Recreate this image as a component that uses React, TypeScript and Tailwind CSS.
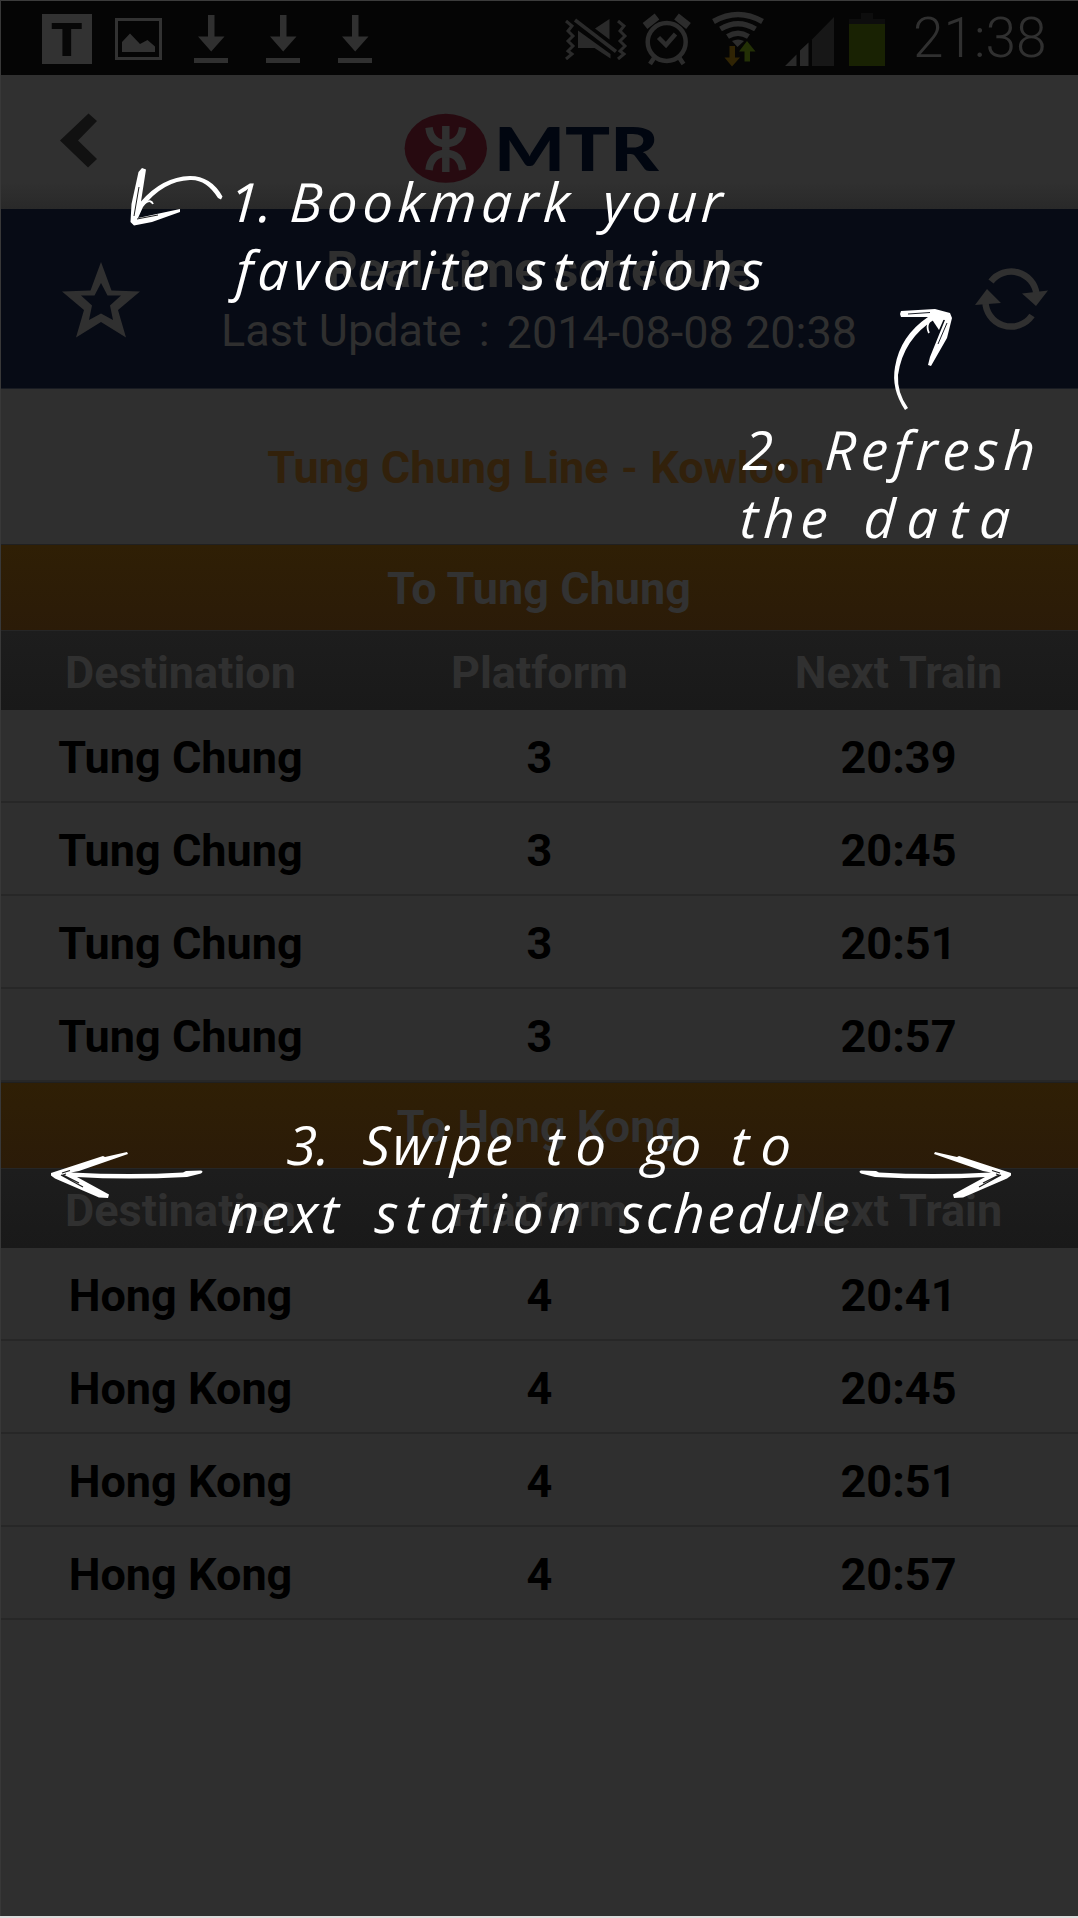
import type { ReactNode } from "react";

type IconProps = { x: number; y?: number; w: number; h?: number; className?: string; children: ReactNode };

function Icon({ x, y = 0, w, h = 75, className = "", children }: IconProps) {
  return (
    <svg viewBox={`${x} ${y} ${w} ${h}`} width={w} height={h} className={`block shrink-0 ${className}`}>
      {children}
    </svg>
  );
}

function Download({ className }: { className: string }) {
  return (
    <Icon x={194} w={34} className={className}>
      <path d="M208 15h6.500v21.500h10L211.200 51.500 198 36.500h10z" fill="#303030" />
      <path d="M194 58h34v5h-34z" fill="#303030" />
    </Icon>
  );
}

function StatusBar() {
  return (
    <div className="flex h-[75px] items-start border-t border-[#3c3c3c] bg-[#050505]">
      <div className="mt-[13px] ml-[42px] flex h-[50px] w-[50px] items-center justify-center bg-[#323232]">
        <span className="inline-block scale-x-[1.150] font-['Lato'] text-[45px] leading-none font-extrabold text-[#070707]">
          T
        </span>
      </div>
      <Icon x={115} w={47} y={1} h={74} className="ml-[23px]">
        <path d="M116.500 19.500h44v39h-44z" fill="none" stroke="#323232" strokeWidth="3" />
        <path d="M122 52V42l8-8.500 10 10.500 7.500-4 7.500 6.500V52z" fill="#323232" />
      </Icon>
      <Download className="-mt-px ml-[32px]" />
      <Download className="-mt-px ml-[38px]" />
      <Download className="-mt-px ml-[38px]" />

      <Icon x={564} w={64} className="-mt-px ml-[192px]">
        <g fill="none" stroke="#2a2a2a" strokeWidth="3">
          <path d="M566 21l6 5-4 5 5 5-5 5 5 5-5 5 4 3-6 5" />
          <path d="M618 21l6 5-4 5 5 5-5 5 5 5-5 5 4 3-6 5" />
          <path d="M575 20l41 31.500" strokeWidth="3.500" />
        </g>
        <path d="M609.500 19v20.500L595 28.500zM578 30.500l32.500 23.500v4.500L594.500 48H578z" fill="#2a2a2a" />
      </Icon>
      <Icon x={642} w={50} className="-mt-px ml-[14px]">
        <g fill="none" stroke="#2c2c2c">
          <circle cx="666.700" cy="42" r="19" strokeWidth="4.500" />
          <path d="M658.500 37.500l7.500 7.500 9.500-11" strokeWidth="4.500" />
          <path d="M645 26l12-9.500M688.500 26l-12-9.500" strokeWidth="7.500" />
          <path d="M654 58l-4 6M679.500 58l4 6" strokeWidth="4.500" />
        </g>
      </Icon>
      <Icon x={710} w={56} className="-mt-px ml-[18px]">
        <g fill="none" stroke="#2c2c2c" strokeWidth="5.500">
          <path d="M713.500 21.500q24.500-14 49 0" />
          <path d="M720.500 29q17.500-10.500 35 0" />
          <path d="M727.500 36.500q10.500-6.500 21 0" />
        </g>
        <path d="M732 41q6-3 12 0l-6.500 6z" fill="#2c2c2c" />
        <path d="M729.500 46h5.500v11.500h5L732 66.500 724.500 57.500h5z" fill="#302404" />
        <path d="M747 41l8.500 10.500H750V61.500h-5.500V51.500H739z" fill="#233006" />
      </Icon>
      <Icon x={784} w={51} className="-mt-px ml-[18px]">
        <path d="M785 66l11.500-11.500V66zM800 66V50.500l8.500-8V66z" fill="#2a2a2a" />
        <path d="M812 66V39.500L834 17v49z" fill="#171717" />
      </Icon>
      <Icon x={848} w={38} className="-mt-px ml-[13px]">
        <path d="M861 13h12v6h12v6h-36v-6h12z" fill="#0d0d0d" />
        <path d="M849 24h36v42h-36z" fill="#192203" />
      </Icon>
      <span className="mt-px ml-[27px] font-['Roboto'] text-[55px] leading-[72px] font-[350] text-[#303030]">
        21:38
      </span>
    </div>
  );
}

function BrandHeader() {
  return (
    <div className="flex h-[134px] items-start bg-linear-to-b from-[#303030] from-80% to-[#292929]">
      <Icon x={58} y={75} w={42} h={100} className="ml-[58px]">
        <path d="M88.500 113.500l8.500 7.500-19 19.500L97 159l-9 8.500L60 140.500z" fill="#111111" />
      </Icon>
      <Icon x={404} y={75} w={84} h={120} className="ml-[304px]">
        <ellipse cx="445.800" cy="148.300" rx="41.200" ry="34.500" fill="#270a10" />
        <g fill="none" stroke="#303030" strokeWidth="7.500">
          <path d="M445.800 126v46" />
          <path d="M429 127.500q2 16 16.800 16 14.800 0 16.800-16" />
          <path d="M429 170q2-16.500 16.800-16.500 14.800 0 16.800 16.500" />
        </g>
      </Icon>
      <span className="mt-[40px] ml-[6px] inline-block origin-left scale-x-[1.225] font-['Lato'] text-[61px] leading-[66px] font-black text-[#010610]">
        MTR
      </span>
    </div>
  );
}

function ScheduleHeader() {
  return (
    <div className="grid h-[180px] grid-cols-[142px_1fr_142px] items-start border-b border-[#191c22] bg-[#070b15] font-['Roboto'] text-[#2f2f2f]">
      <Icon x={60} y={209} w={82} h={140} className="ml-[60px]">
        <path
          d="M101 262l10.500 28.500 28.500 1-22 18.500 8 27.500-25-15.500-25 15.500 8-27.500-22-18.500 28.500-1z M101 283l-6.500 12.500H81l11 10-3 14.500 12-6.500 12 6.500-3-14.500 11-10h-13.500z"
          fill="#303030"
          fillRule="evenodd"
        />
      </Icon>
      <div className="flex flex-col items-center">
        <h1 className="mt-[32px] text-[50px] leading-[58px] font-bold tracking-[-0.500px]">Real-time schedule</h1>
        <p className="mt-[1px] flex text-[45px] leading-[62px]">
          <span>Last Update</span>
          <span className="mr-[17px] ml-[17px]">:</span>
          <span className="mt-[2px]">2014-08-08 20:38</span>
        </p>
      </div>
      <Icon x={974} y={209} w={76} h={140} className="ml-[38px]">
        <g fill="none" stroke="#303030" strokeWidth="6.500">
          <path d="M991 281.500A25.500 25.500 0 0 1 1036.500 294" />
          <path d="M1032 315.500A25.500 25.500 0 0 1 985.500 300" />
        </g>
        <path d="M1022 293.500l26-3L1036 306zM987 289l14 14-26 2z" fill="#303030" />
      </Icon>
    </div>
  );
}

type Train = { platform: string; time: string };

function DirectionTable({ to, trains }: { to: string; trains: Train[] }) {
  return (
    <section className="font-['Roboto'] text-[45px] font-bold">
      <div className="flex h-[86px] items-center justify-center border-t border-[#202020] bg-linear-to-b from-[#2f1f05] to-[#2b1b08] pt-[2px] text-[#323232]">
        To {to}
      </div>
      <div className="grid h-[80px] grid-cols-3 items-center border-t border-[#262626] bg-linear-to-b from-[#1d1d1d] to-[#191919] pt-[5px] pl-px text-center text-[#303030]">
        <span>Destination</span>
        <span>Platform</span>
        <span>Next Train</span>
      </div>
      {trains.map((train) => (
        <div
          key={train.time}
          className="grid h-[93px] grid-cols-3 items-center border-b-2 border-[#272727] pt-[5px] pl-px text-center text-black"
        >
          <span>{to}</span>
          <span>{train.platform}</span>
          <span>{train.time}</span>
        </div>
      ))}
    </section>
  );
}

const HAND = "absolute flex -skew-x-3 font-['Open_Sans'] leading-[60px] font-medium italic text-white whitespace-pre";

function Coach() {
  return (
    <div className="absolute inset-0">
      <p className={`${HAND} top-[171px] left-[229px] text-[54px]`}>
        <span className="w-[61px]">1.</span>
        <span className="w-[313px] tracking-[5px]">Bookmark</span>
        <span className="tracking-[4px]">your</span>
      </p>
      <p className={`${HAND} top-[239px] left-[236px] text-[54px]`}>
        <span className="w-[287px] tracking-[5px]">favourite</span>
        <span className="tracking-[7.500px]">stations</span>
      </p>
      <p className={`${HAND} top-[419px] left-[743px] text-[54px]`}>
        <span className="w-[82px] tracking-[5px]">2.</span>
        <span className="tracking-[5.500px]">Refresh</span>
      </p>
      <p className={`${HAND} top-[487px] left-[740px] text-[54px]`}>
        <span className="w-[124px] tracking-[6px]">the</span>
        <span className="tracking-[12px]">data</span>
      </p>
      <p className={`${HAND} top-[1114px] left-[287px] text-[54px]`}>
        <span className="w-[76px]">3.</span>
        <span className="w-[183px] tracking-[3px]">Swipe</span>
        <span className="w-[97px] tracking-[12px]">to</span>
        <span className="w-[88px]">go</span>
        <span className="tracking-[12px]">to</span>
      </p>
      <p className={`${HAND} top-[1182px] left-[228px] text-[54px]`}>
        <span className="w-[147px] tracking-[3px]">next</span>
        <span className="w-[245px] tracking-[7px]">station</span>
        <span className="tracking-[3px]">schedule</span>
      </p>

      <Icon x={125} y={160} w={105} h={75} className="absolute top-[160px] left-[125px]">
        <path
          d="M142 168l4 1.500-5 32Q162 177 190 176q21 0 32.500 20.500l-1.500 3-3-1.500Q206 179 190 180q-27 1-47 27l-5 11 42-9v3l-28 10-18 3.500-3.500-3.500 1-18 7-32z"
          fill="#fff"
        />
        <path d="M139 187l-5 29M137 219l21-4" fill="none" stroke="#1d1d1d" strokeWidth="1" />
        <path d="M145 203q6-4 8 1" fill="none" stroke="#fff" strokeWidth="1.800" />
      </Icon>
      <Icon x={890} y={300} w={70} h={115} className="absolute top-[300px] left-[890px]">
        <path
          d="M901 311l34-2 15 4 2 5-5 20-16 28-3-1 2-8 15-37-10-1Q903 339 898 375q-1 18 10 33l-3 2Q891 389 895 367q5-31 33-50l-27 0-1-3z"
          fill="#fff"
        />
        <path d="M931 318l15-4-7 16z" fill="#fff" />
        <path d="M929 322q-3 5 0 11" fill="none" stroke="#fff" strokeWidth="1.800" />
        <path d="M908 314l22-1.500M947 323l-9 21" fill="none" stroke="#1b1f28" strokeWidth="1" />
      </Icon>
      <Icon x={48} y={1145} w={160} h={60} className="absolute top-[1145px] left-[48px]">
        <SwipeArrow />
      </Icon>
      <Icon x={48} y={1145} w={160} h={60} className="absolute top-[1145px] left-[854px] -scale-x-100">
        <SwipeArrow />
      </Icon>
    </div>
  );
}

function SwipeArrow() {
  return (
    <>
      <path
        d="M51 1173l52-17 2 1 22-5 1 2-49 17-8 1.500q60 3 112 0l3-1.500 15-.5q3 1 0 3l-14 3.500q-60 3-110 0l32 17.500-1 3.500-9-.5-44-19-4-3z"
        fill="#fff"
      />
      <path d="M62 1173l8-2.500M61 1175l22 12M66 1174l-3 1 16 8" fill="none" stroke="#1b1b1b" strokeWidth="1.200" />
    </>
  );
}

const TUNG_CHUNG: Train[] = ["20:39", "20:45", "20:51", "20:57"].map((time) => ({ platform: "3", time }));
const HONG_KONG: Train[] = ["20:41", "20:45", "20:51", "20:57"].map((time) => ({ platform: "4", time }));

export default function App() {
  return (
    <main className="relative h-[1918px] w-[1078px] overflow-hidden border-b-2 border-[#dcdcdc] bg-[#2f2f2f]">
      <StatusBar />
      <BrandHeader />
      <ScheduleHeader />
      <h2 className="h-[155px] pl-[14px] text-center font-['Roboto'] text-[45px] leading-[157px] font-bold text-[#32210b]">
        Tung Chung Line <span className="mx-[2px] font-medium">-</span> Kowloon
      </h2>
      <DirectionTable to="Tung Chung" trains={TUNG_CHUNG} />
      <DirectionTable to="Hong Kong" trains={HONG_KONG} />
      <Coach />
      <div className="absolute inset-y-0 left-0 w-px bg-[#383838]" />
    </main>
  );
}
